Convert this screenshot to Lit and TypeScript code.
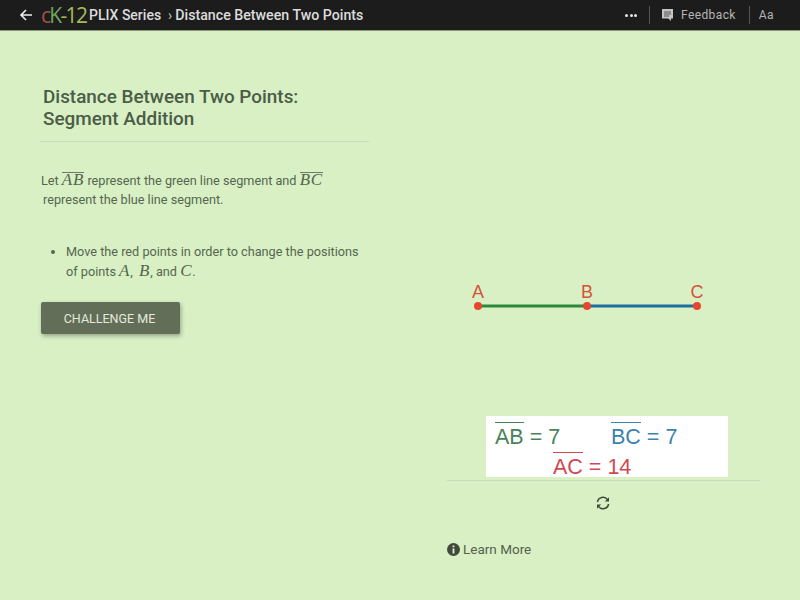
import { LitElement, html, css, svg } from 'lit';
import { customElement } from 'lit/decorators.js';

@customElement('app-root')
export class AppRoot extends LitElement {
  static styles = css`
    :host {
      display: block;
      width: 800px;
      height: 600px;
      overflow: hidden;
      background: #d9f0c5;
      font-family: Roboto, "Liberation Sans", sans-serif;
    }

    .topbar {
      height: 30px;
      background: #1c1c1c;
      border-bottom: 1px solid #8a9a78;
      display: flex;
      align-items: center;
      color: #e8e8e8;
    }

    .back {
      margin-left: 19px;
      width: 14px;
      height: 14px;
    }

    .logo {
      margin-left: 8px;
      width: 44px;
      font-family: "Open Sans", sans-serif;
      font-size: 21px;
      letter-spacing: -1.7px;
      line-height: 30px;
      white-space: nowrap;
    }

    .logo .c { color: #a5533f; }
    .logo .k { color: #6fa85a; }
    .logo .n { color: #a5bc55; }

    .crumb {
      margin-left: 4px;
      font-size: 14px;
      font-weight: 500;
      color: #dcdcdc;
      white-space: nowrap;
    }

    .crumb .sep {
      font-size: 14px;
      margin: 0 3px 0 7px;
      color: #bbb;
    }

    .crumb .page { font-size: 14.2px; }

    .tools {
      margin-left: auto;
      display: flex;
      align-items: center;
      height: 100%;
      font-size: 12px;
      color: #b5b5b5;
      letter-spacing: 0.4px;
    }

    .dots {
      display: flex;
      gap: 1.5px;
      margin-right: 12px;
    }

    .dots i {
      width: 3px;
      height: 3px;
      border-radius: 50%;
      background: #e6e6e6;
    }

    .vr {
      width: 1px;
      height: 18px;
      background: #555;
    }

    .feedback {
      display: flex;
      align-items: center;
      gap: 7px;
      margin: 0 13px 0 11px;
    }

    .aa { margin: 0 26px 0 9px; }

    .content {
      display: grid;
      grid-template-columns: 369px 313px;
      column-gap: 78px;
    }

    .left { padding: 55px 0 0 40px; }

    h1 {
      margin: 0;
      padding: 0 0 11px 3px;
      font-size: 18.9px;
      line-height: 22px;
      font-weight: 500;
      color: #4b5c47;
      border-bottom: 1px solid #c6dcb4;
    }

    .copy {
      font-size: 12.7px;
      line-height: 19px;
      color: #55664f;
    }

    .intro { margin: 29px 0 0; padding-left: 1px; }
    .intro span.rest { padding-left: 2px; }

    ul {
      margin: 33px 0 0;
      padding: 0 0 0 26px;
    }

    .m {
      font-family: "Liberation Serif", serif;
      font-style: italic;
      font-size: 17px;
      letter-spacing: 0.8px;
    }

    .over {
      display: inline-block;
      border-top: 1px solid #6c7a66;
      line-height: 14px;
    }

    .btn {
      display: block;
      margin: 21px 0 0 1px;
      width: 139px;
      height: 32px;
      border: 0;
      padding: 0 2px 0 0;
      border-radius: 2px;
      background: #636e59;
      color: #e4eadc;
      font: 400 12.5px Roboto, sans-serif;
      box-shadow: 1px 2px 4px rgba(60, 70, 50, 0.45);
    }

    .right { padding-top: 239px; }

    .diagram { display: block; width: 313px; height: 60px; }
    .diagram text { font: 18px "Liberation Sans", sans-serif; fill: #d4533a; text-anchor: middle; }

    .board {
      margin: 86px 0 0 39px;
      width: 242px;
      height: 61px;
      background: #fff;
      font: 21.5px "Liberation Sans", sans-serif;
    }

    .eq {
      display: flex;
      padding: 6px 0 0 9px;
      height: 24px;
      align-items: flex-start;
    }

    .eq span { white-space: nowrap; }
    .eq .green { color: #4a8258; width: 116px; }
    .eq .blue { color: #3b82ad; }
    .eq.red { padding-left: 67px; color: #cf4a50; }

    .bar {
      display: inline-block;
      border-top: 1.5px solid currentColor;
      line-height: 28px;
    }

    .rule {
      margin-top: 3px;
      border-top: 1px solid #c6dcb4;
    }

    .refresh {
      display: block;
      margin: 14px 0 0 148px;
      width: 16px;
      height: 16px;
    }

    .learn {
      display: flex;
      align-items: center;
      gap: 3px;
      margin-top: 30px;
      font-size: 13.5px;
      color: #55604f;
    }
  `;

  render() {
    return html`
      <div class="topbar">
        <svg class="back" viewBox="0 0 14 14" fill="none" stroke="#eee" stroke-width="1.6">
          <path d="M13 7H2M7 2L2 7l5 5" />
        </svg>
        <div class="logo"><span class="c">c</span><span class="k">K</span><span class="n">-12</span></div>
        <div class="crumb">PLIX Series<span class="sep">›</span><span class="page">Distance Between Two Points</span></div>
        <div class="tools">
          <div class="dots"><i></i><i></i><i></i></div>
          <div class="vr"></div>
          <div class="feedback">
            <svg width="13" height="14" viewBox="0 0 13 14">
              <path fill="#c4c4c4" d="M1 1h11v9.5h-2V13l-2.6-2.5H1z" />
              <path stroke="#555" stroke-width="1" d="M3 4h7M3 6h7M3 8h5" />
            </svg>
            Feedback
          </div>
          <div class="vr"></div>
          <div class="aa">Aa</div>
        </div>
      </div>
      <div class="content">
        <section class="left">
          <h1>Distance Between Two Points:<br />Segment Addition</h1>
          <p class="copy intro">
            Let <span class="m over">AB</span> represent the green line segment and
            <span class="m over">BC</span><br />
            <span class="rest">represent the blue line segment.</span>
          </p>
          <ul class="copy">
            <li>
              Move the red points in order to change the positions<br />
              of points <span class="m">A</span>,&nbsp; <span class="m">B</span>, and
              <span class="m">C</span>.
            </li>
          </ul>
          <button class="btn">CHALLENGE ME</button>
        </section>
        <section class="right">
          <svg class="diagram" viewBox="0 0 313 60">
            ${svg`
              <line x1="31" y1="36" x2="140" y2="36" stroke="#2a8a3a" stroke-width="3" />
              <line x1="140" y1="36" x2="250" y2="36" stroke="#1c6f9f" stroke-width="3" />
              <circle cx="31" cy="36" r="4" fill="#e8452f" />
              <circle cx="140" cy="36" r="4" fill="#e8452f" />
              <circle cx="250" cy="36" r="4" fill="#e8452f" />
              <text x="31" y="28">A</text>
              <text x="140" y="28">B</text>
              <text x="250" y="28">C</text>
            `}
          </svg>
          <div class="board">
            <div class="eq">
              <span class="green"><span class="bar">AB</span> = 7</span>
              <span class="blue"><span class="bar">BC</span> = 7</span>
            </div>
            <div class="eq red"><span><span class="bar">AC</span> = 14</span></div>
          </div>
          <div class="rule"></div>
          <svg class="refresh" viewBox="0 0 16 16" fill="none" stroke="#3f4a3c" stroke-width="1.5">
            <path d="M2.4 7A5.7 5.7 0 0 1 12.6 4.6" />
            <path d="M13.6 9A5.7 5.7 0 0 1 3.4 11.4" />
            <path fill="#3f4a3c" stroke="none" d="M14 2.2v4.2H9.8zM2 13.8V9.6h4.2z" />
          </svg>
          <div class="learn">
            <svg width="13" height="13" viewBox="0 0 13 13">
              <circle cx="6.5" cy="6.5" r="6.5" fill="#3f4a3c" />
              <path fill="#e6f2d8" d="M5.6 2.6h1.8v1.7H5.6zM5.6 5.4h1.8v5H5.6z" />
            </svg>
            Learn More
          </div>
        </section>
      </div>
    `;
  }
}
